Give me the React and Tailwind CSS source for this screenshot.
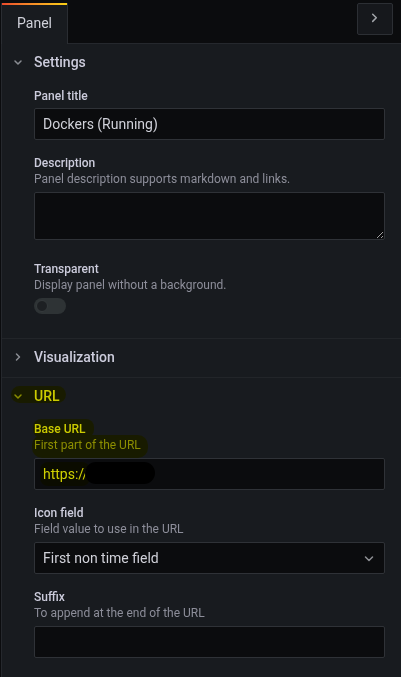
import React from "react";

function ChevronDown({ className = "", color = "#8a8d93" }) {
  return (
    <svg width="16" height="16" viewBox="0 0 16 16" className={className} fill="none">
      <path d="M5 7 L8 10 L11 7" stroke={color} strokeWidth="1.5" strokeLinecap="round" strokeLinejoin="round" />
    </svg>
  );
}

function ChevronRight({ className = "", color = "#8a8d93" }) {
  return (
    <svg width="16" height="16" viewBox="0 0 16 16" className={className} fill="none">
      <path d="M6.5 5 L9.5 8 L6.5 11" stroke={color} strokeWidth="1.5" strokeLinecap="round" strokeLinejoin="round" />
    </svg>
  );
}

function CategoryHeader({ title, open }) {
  return (
    <div className="flex h-[38px] items-center gap-[8px] pb-[3px] pl-[8px]">
      {open ? <ChevronDown /> : <ChevronRight />}
      <span className="text-[14px] font-medium leading-[20px] text-[#ccccdc]">{title}</span>
    </div>
  );
}

function FieldLabel({ label, description }) {
  return (
    <div className="mb-[4px]">
      <div className="text-[12px] font-medium leading-[15px] text-[#ccccdc]">{label}</div>
      {description && (
        <div className="text-[12px] leading-[17px] text-[#8d8e9a]">{description}</div>
      )}
    </div>
  );
}

function TextBox({ children }) {
  return (
    <div className="flex h-[32px] w-full items-center rounded-[2px] border border-[#2f3237] bg-[#0b0c0e] px-[8px] text-[14px] text-[#d0d1d9]">
      {children}
    </div>
  );
}

export default function App() {
  return (
    <div className="relative isolate h-[677px] w-[401px] overflow-hidden bg-[#0b0c0e] font-[family-name:Roboto,sans-serif] text-[#ccccdc]">
      {/* tab strip */}
      <div className="flex h-[44px] items-end">
        <div className="ml-[1px] flex h-[41px] w-[67px] flex-col border-x border-[#2a2d32] bg-[#181b1f]">
          <div className="h-[2px] bg-gradient-to-r from-[#ec4a2b] to-[#f9cf14]" />
          <div className="flex flex-1 items-center justify-center pb-[3px] text-[14px] text-[#d0d1d9]">Panel</div>
        </div>
        <div className="flex h-full flex-1 justify-end border-b border-[#25282d] pr-[8px] pt-[3px]">
          <div className="relative h-[32px] w-[36px] rounded-[2px] border border-[#2c2f34] bg-[#16181c]">
            <svg width="16" height="16" viewBox="0 0 16 16" className="absolute left-[9px] top-[7px]" fill="none">
              <path d="M5.7 3.2 L9.3 6.8 L5.7 10.4" stroke="#a3a6ab" strokeWidth="1.5" strokeLinecap="round" strokeLinejoin="round" />
            </svg>
          </div>
        </div>
      </div>

      {/* options pane */}
      <div className="ml-[1px] h-[633px] border-l border-[#25282d] bg-[#181b1f]">
        {/* Settings */}
        <div className="border-b border-[#222529]">
          <CategoryHeader title="Settings" open />
          <div className="pb-[8px] pl-[32px] pr-[16px] pt-[7px]">
            <div className="mb-[16px]">
              <FieldLabel label="Panel title" />
              <TextBox>Dockers (Running)</TextBox>
            </div>
            <div className="mb-[22px]">
              <FieldLabel label="Description" description="Panel description supports markdown and links." />
              <textarea
                className="block h-[48px] w-full rounded-[2px] border border-[#2f3237] bg-[#0b0c0e] [color-scheme:dark]"
                defaultValue=""
              />
            </div>
            <div className="mb-[16px]">
              <FieldLabel label="Transparent" description="Display panel without a background." />
              <div className="relative mt-[2px] h-[16px] w-[32px] rounded-full bg-[#2e3335]">
                <div className="absolute left-[2px] top-[2px] h-[12px] w-[12px] rounded-full border border-[#353a3c] bg-[#1d2023]" />
              </div>
            </div>
          </div>
        </div>

        {/* Visualization */}
        <div className="border-b border-[#222529]">
          <CategoryHeader title="Visualization" />
        </div>

        {/* URL */}
        <div>
          <CategoryHeader title="URL" open />
          <div className="pb-[8px] pl-[32px] pr-[16px] pt-[6px]">
            <div className="mb-[16px]">
              <FieldLabel label="Base URL" description="First part of the URL" />
              <TextBox>https://</TextBox>
            </div>
            <div className="mb-[16px]">
              <FieldLabel label="Icon field" description="Field value to use in the URL" />
              <div className="flex h-[32px] w-full items-center justify-between rounded-[2px] border border-[#2f3237] bg-[#0b0c0e] pl-[8px] pr-[7px] text-[14px] text-[#d0d1d9]">
                <span>First non time field</span>
                <svg width="16" height="16" viewBox="0 0 16 16" fill="none">
                  <path d="M4.5 7 L8 10.5 L11.5 7" stroke="#8e9095" strokeWidth="1.5" strokeLinecap="round" strokeLinejoin="round" />
                </svg>
              </div>
            </div>
            <div className="mb-[16px]">
              <FieldLabel label="Suffix" description="To append at the end of the URL" />
              <TextBox />
            </div>
          </div>
        </div>
      </div>

      {/* highlighter marks */}
      <div className="pointer-events-none absolute left-[11px] top-[386px] h-[17px] w-[55px] rounded-[9px] bg-[#ffff00] mix-blend-multiply" />
      <div className="pointer-events-none absolute left-[33px] top-[419px] h-[19px] w-[61px] rounded-[8px] bg-[#ffff00] mix-blend-multiply" />
      <div className="pointer-events-none absolute left-[32px] top-[435px] h-[23px] w-[116px] rounded-[10px] bg-[#ffff00] mix-blend-multiply" />
      <div className="pointer-events-none absolute left-[40px] top-[462px] h-[24px] w-[50px] rounded-[8px] bg-[#ffff00] mix-blend-multiply" />

      {/* redaction */}
      <div className="pointer-events-none absolute left-[85px] top-[462px] h-[22px] w-[70px] rounded-[11px] bg-black" />
    </div>
  );
}
